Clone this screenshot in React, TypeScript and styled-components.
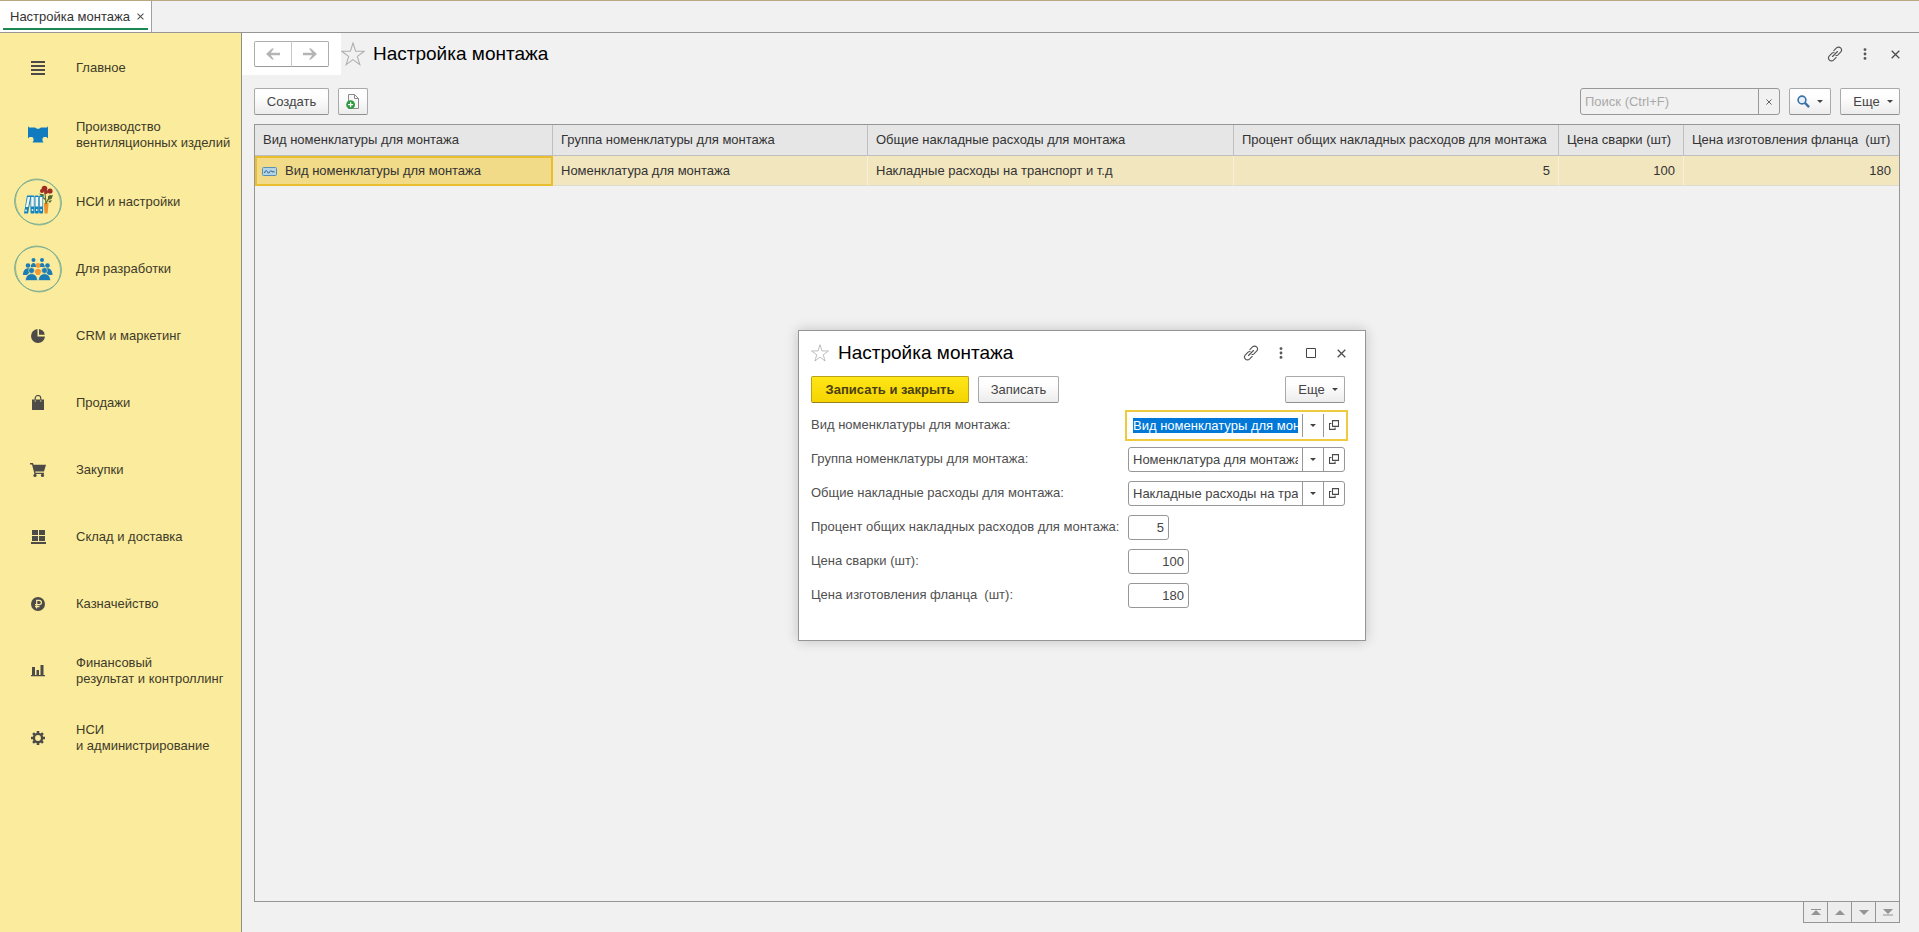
import React, { useEffect, useRef } from "react";
import styled, { createGlobalStyle, css } from "styled-components";

const GlobalStyle = createGlobalStyle`
  *, *::before, *::after { box-sizing: border-box; }
  body {
    margin: 0;
    background: #f1f1f1;
    color: #3f3f3f;
    font: 13px/16px "Liberation Sans", Arial, sans-serif;
  }
  button, input { font: inherit; color: inherit; }
  button { cursor: pointer; }
  svg { flex: none; }
`;

const Page = styled.div`
  display: flex;
  flex-direction: column;
  min-height: 100vh;
`;

const TabBar = styled.div`
  display: flex;
  height: 33px;
  border-top: 1px solid #b9a781;
  border-bottom: 1px solid #969696;
`;

const Tab = styled.div`
  display: flex;
  align-items: center;
  gap: 3px;
  padding: 0 3px 0 10px;
  background: #fff;
  border-right: 1px solid #a0a0a0;
  color: #333;
  position: relative;

  &::after {
    content: "";
    position: absolute;
    left: 3px;
    right: 3px;
    bottom: 2px;
    height: 2px;
    background: #1c8a50;
  }
`;

const IconButton = styled.button<{ $size?: number }>`
  display: inline-flex;
  align-items: center;
  justify-content: center;
  width: ${(p) => p.$size ?? 30}px;
  height: ${(p) => p.$size ?? 30}px;
  padding: 0;
  border: 0;
  background: none;
  color: #4d4d4d;
`;

const Body = styled.div`
  display: flex;
  flex: 1;
`;

const Sidebar = styled.nav`
  flex: none;
  width: 242px;
  padding-top: 1px;
  background: #faec9c;
  border-right: 1px solid #8e8e86;
`;

const MenuLink = styled.a`
  display: grid;
  grid-template-columns: 76px 1fr;
  align-items: center;
  height: 67px;
  color: #3f3a2a;
  text-decoration: none;
  white-space: pre-line;
`;

const MenuIcon = styled.span`
  display: flex;
  justify-content: center;
  color: #4c4b47;
  svg { display: block; }
`;

const Main = styled.main`
  position: relative;
  display: flex;
  flex: 1;
  flex-direction: column;
  min-width: 0;
  padding-bottom: 9px;
`;

const Header = styled.header`
  display: flex;
  align-items: center;
  height: 42px;
  padding-right: 9px;
`;

const HistoryBox = styled.div`
  display: flex;
  align-self: stretch;
  align-items: center;
  padding: 0 12px;
  background: #fff;
`;

const HistoryButton = styled.button`
  display: flex;
  align-items: center;
  justify-content: center;
  width: 38px;
  height: 26px;
  padding: 0;
  background: #fff;
  border: 1px solid #adadad;
  border-bottom-color: #999;
  border-radius: 2px 0 0 2px;
  color: #b4b4b4;

  & + & {
    margin-left: -1px;
    border-left-color: #c8c8c8;
    border-radius: 0 2px 2px 0;
  }
`;

const Title = styled.h1`
  flex: 1;
  margin: 0 0 0 8px;
  color: #000;
  font-size: 19px;
  font-weight: 400;
  line-height: 24px;
`;

const Toolbar = styled.div`
  display: flex;
  align-items: center;
  gap: 9px;
  margin: 13px 19px 9px 12px;
`;

const Spacer = styled.div`
  flex: 1;
`;

const Button = styled.button<{ $primary?: boolean; $width?: number }>`
  display: inline-flex;
  align-items: center;
  justify-content: center;
  gap: 7px;
  width: ${(p) => (p.$width ? `${p.$width}px` : "auto")};
  height: 27px;
  padding: 0;
  background: linear-gradient(#fefefe 30%, #ececec);
  border: 1px solid #a9a9a9;
  border-bottom-color: #8f8f8f;
  border-radius: 2px;
  color: #444;
  white-space: nowrap;

  ${(p) =>
    p.$primary &&
    css`
      background: linear-gradient(#ffe617, #f5d400);
      border-color: #b8a11c;
      border-bottom-color: #94811b;
      color: #4a3f10;
      font-weight: 700;
    `}
`;

const MoreButton = styled(Button)`
  width: 60px;
  padding-left: 6px;
`;

const SearchBox = styled.div`
  display: flex;
  width: 200px;
  height: 27px;
  border: 1px solid #999;
  border-radius: 3px;

  input {
    flex: 1;
    min-width: 0;
    padding: 0 4px;
    border: 0;
    background: none;
    outline: 0;
  }
  input::placeholder { color: #a9a9a9; opacity: 1; }
  button { width: 21px; height: 25px; border-left: 1px solid #999; }
`;

const GridFrame = styled.div`
  flex: 1;
  margin: 0 19px 0 12px;
  border: 1px solid #969696;
`;

const Table = styled.table`
  width: 100%;
  table-layout: fixed;
  border-collapse: separate;
  border-spacing: 0;
  color: #333;

  th, td {
    padding: 0 8px;
    text-align: left;
    font-weight: 400;
    white-space: pre;
    overflow: hidden;
  }
  th {
    height: 31px;
    background: #e6e6e6;
    border-right: 1px solid #bfbfbf;
    border-bottom: 1px solid #bfbfbf;
  }
  td {
    height: 30px;
    background: #f2e6bf;
    border: solid #f7f1dc;
    border-width: 0 1px 1px 0;
    border-bottom-color: #dedccf;
  }
  th:last-child, td:last-child { border-right: 0; }
`;

const NumberCell = styled.td`
  && { text-align: right; }
`;

const ActiveCell = styled.td`
  &&& {
    padding: 0 5px;
    background: #f1db88;
    border: 2px solid #e8bd2e;
  }
  svg { margin-right: 8px; vertical-align: middle; }
`;

const Pager = styled.div`
  display: flex;
  align-self: flex-end;
  margin-right: 19px;
`;

const PagerButton = styled.button`
  display: flex;
  align-items: center;
  justify-content: center;
  width: 25px;
  height: 21px;
  padding: 0;
  margin-left: -1px;
  background: #ededed;
  border: 1px solid #969696;
  border-top: 0;
  color: #949494;
`;

const Dialog = styled.section`
  position: absolute;
  top: 297px;
  left: 556px;
  width: 568px;
  padding: 7px 0 28px 12px;
  background: #fff;
  border: 1px solid #959595;
  box-shadow: 0 0 12px rgba(0, 0, 0, 0.2);
`;

const DialogHeader = styled.div`
  display: flex;
  align-items: center;
  height: 30px;
  padding-right: 9px;

  h2 {
    flex: 1;
    margin: 0 0 0 9px;
    color: #000;
    font-size: 19px;
    font-weight: 400;
    line-height: 24px;
  }
`;

const DialogToolbar = styled.div`
  display: flex;
  gap: 9px;
  margin: 8px 20px 5px 0;
`;

const FieldRow = styled.div`
  display: grid;
  grid-template-columns: 317px 217px;
  align-items: center;
  height: 34px;
  color: #505050;

  label { white-space: pre; }
`;

const Field = styled.div<{ $width?: number; $focused?: boolean }>`
  display: flex;
  align-items: center;
  width: ${(p) => p.$width ?? 217}px;
  height: 25px;
  border: 1px solid #979797;
  border-radius: 3px;
  ${(p) =>
    p.$focused &&
    css`
      border-color: transparent;
      outline: 2px solid #efc93e;
      outline-offset: 1px;
      border-radius: 0;
    `}

  input {
    flex: 1;
    min-width: 0;
    height: 23px;
    padding: 0;
    margin: 0 4px;
    border: 0;
    outline: 0;
    background: none;
    color: #444;
    text-align: ${(p) => (p.$width ? "right" : "left")};
  }
  input::selection { background: #0078d7; color: #fff; }
  button {
    width: 21px;
    height: 23px;
    border-left: 1px solid #979797;
  }
`;

const CrossIcon = ({ size = 9 }: { size?: number }) => (
  <svg width={size} height={size} viewBox="0 0 9 9" fill="none" stroke="currentColor" strokeWidth="1.3">
    <path d="M.7.7l7.6 7.6M8.3.7L.7 8.3" />
  </svg>
);

const StarIcon = ({ size }: { size: number }) => (
  <svg width={size} height={size} viewBox="0 0 24 24" fill="none" stroke="#b0b0b0" strokeWidth="1.1">
    <path d="M12 1l2.600 8.200 8.600.1-6.900 5.100 2.500 8.200-6.800-5-6.800 5 2.500-8.200-6.900-5.100 8.600-.1z" />
  </svg>
);

const LinkIcon = () => (
  <svg width="16" height="16" viewBox="0 0 18 18" fill="none" stroke="#555" strokeWidth="1.300" strokeLinecap="round">
    <path d="M6.2 11.8l5.6-5.6M7.7 5.2l3-3a3.2 3.2 0 0 1 4.6 0 3.4 3.4 0 0 1 0 4.7l-3 3a3 3 0 0 1-2.2.8M10.3 12.8l-3 3a3.2 3.2 0 0 1-4.6 0 3.4 3.4 0 0 1 0-4.7l3-3a3 3 0 0 1 2.2-.8" />
  </svg>
);

const DotsIcon = () => (
  <svg width="4" height="12" viewBox="0 0 4 12" fill="#555">
    <circle cx="2" cy="1.6" r="1.400" />
    <circle cx="2" cy="6" r="1.400" />
    <circle cx="2" cy="10.4" r="1.400" />
  </svg>
);

const SquareIcon = () => (
  <svg width="10" height="10" viewBox="0 0 10 10" fill="none" stroke="#444">
    <path d="M.5.5h9v9h-9z" />
  </svg>
);

const CaretIcon = () => (
  <svg width="6" height="3" viewBox="0 0 6 3" fill="#444">
    <path d="M0 0h6L3 3z" />
  </svg>
);

const OpenIcon = () => (
  <svg width="10" height="10" viewBox="0 0 10 10" fill="none" stroke="#4a4a4a" strokeWidth="1.1">
    <path d="M3.5.6h6v5.8h-6zM2.4 3.5H.5v5.9h5.6V7.6" />
  </svg>
);

const ArrowIcon = ({ right }: { right?: boolean }) => (
  <svg width="14" height="12" viewBox="0 0 14 12" fill="currentColor">
    <path
      d="M0 6l6-5.500h2L4.800 4.800H14v2.400H4.800L8 11.500H6z"
      transform={right ? "matrix(-1 0 0 1 14 0)" : undefined}
    />
  </svg>
);

const CopyIcon = () => (
  <svg width="14" height="16" viewBox="0 0 14 16" fill="none">
    <path d="M2.500.5h6l4 4v10h-10z" fill="#f8f8f8" stroke="#8b8b8b" />
    <path d="M8.500.5v4h4" stroke="#8b8b8b" />
    <circle cx="4.600" cy="10.700" r="4.400" fill="#2c9a3f" />
    <path d="M4.600 8.200v5M2.100 10.700h5" stroke="#fff" strokeWidth="1.300" />
  </svg>
);

const SearchIcon = () => (
  <svg width="13" height="13" viewBox="0 0 13 13" fill="none" stroke="#3c72a4">
    <circle cx="5" cy="5" r="3.900" strokeWidth="1.600" fill="#e4f0fa" />
    <path d="M7.900 7.900l4.200 4.200" strokeWidth="2.400" />
  </svg>
);

const RecordIcon = () => (
  <svg width="15" height="9" viewBox="0 0 15 9" fill="none">
    <rect x=".5" y=".5" width="14" height="8" rx="1" fill="#b4d3e4" stroke="#5790b4" />
    <path d="M2.500 6c1-3 2-3 3-1s1.800 1 2.500-.5 1.500-.6 2 .3h2.500" stroke="#235f8c" />
  </svg>
);

const pagerShapes = [
  "M0 0h10v1H0zM5 1l5 5H0z",
  "M5 1l5 5H0z",
  "M0 1h10L5 6z",
  "M0 0h10L5 5zM0 5.500h10v1H0z",
];

const MenuListIcon = () => (
  <svg width="14" height="14" viewBox="0 0 14 14" fill="currentColor">
    <path d="M0 0h14v2H0zM0 4h14v2H0zM0 8h14v2H0zM0 12h14v2H0z" />
  </svg>
);

const DuctIcon = () => (
  <svg width="20" height="17" viewBox="0 0 20 17" fill="#117bbf">
    <path d="M0 0l1 1.500h6l2 1.300h2l2-1.300h6L20 0v12.500L18.500 11h-2.800L14.500 12.500v2.300l1 1.700h-11l1-1.700v-2.300L4.300 11H1.500L0 12.500z" />
  </svg>
);

const Ring = () => (
  <g fill="none" strokeWidth=".8">
    <ellipse cx="24" cy="24" rx="23.500" ry="22.200" stroke="#5f9c92" transform="rotate(20 24 24)" />
    <ellipse cx="24" cy="24" rx="22" ry="23.500" stroke="#86b391" transform="rotate(-35 24 24)" />
  </g>
);

const BindersIcon = () => (
  <svg width="48" height="48" viewBox="0 0 48 48">
    <Ring />
    <path d="M29.800 25h4.800l-1 10.500h-3z" fill="#ee922c" />
    <path d="M32 26l-1-11M32.300 25l4-8M32 22l-5-4" stroke="#5d6b2c" strokeWidth="1.200" fill="none" />
    <path d="M34 18l5-1-1.500 4-3.500 1zM25 15.500l5 1-1 3.500zM34 23l4-1-2 3z" fill="#57662b" />
    <g fill="#9e2c22">
      <circle cx="30.500" cy="10.500" r="2.800" />
      <circle cx="36" cy="13" r="2.600" />
      <circle cx="28" cy="13" r="2" />
      <circle cx="32" cy="14" r="2" />
    </g>
    <g fill="#1384c0">
      <path d="M13 17.500h4.500l-3.500 18h-4z" />
      <rect x="16.500" y="17.500" width="4" height="18" rx="1" />
      <rect x="20.800" y="17.500" width="4" height="18" rx="1" />
      <rect x="25.100" y="17.500" width="4" height="18" rx="1" />
    </g>
    <g fill="#f0f7f2">
      <path d="M13.700 19h2.500l-2 10h-2.500z" />
      <path d="M17.200 19h2.600v9.500h-2.600zM21.500 19h2.600v9.500h-2.600zM25.800 19h2.600v9.500h-2.600z" />
      <circle cx="12" cy="32.500" r=".9" />
      <circle cx="18.500" cy="32" r=".9" />
      <circle cx="22.800" cy="32" r=".9" />
      <circle cx="27.100" cy="32" r=".9" />
    </g>
  </svg>
);

const PeopleIcon = () => (
  <svg width="48" height="48" viewBox="0 0 48 48">
    <Ring />
    <g fill="#1c7db5">
      <circle cx="19.500" cy="15" r="2" />
      <circle cx="28" cy="15" r="2" />
      <path d="M16.800 22c0-5.500 5.400-5.500 5.400 0zM25.300 22c0-5.500 5.400-5.500 5.400 0z" />
      <circle cx="14" cy="20.500" r="2.300" />
      <circle cx="33.500" cy="20.500" r="2.300" />
      <path d="M9 30c0-8 8-8 8-4l-4 4zM38.500 30c0-8-8-8-8-4l4 4z" />
    </g>
    <circle cx="24" cy="20.500" r="2.400" fill="#f39a36" />
    <path d="M20.800 27c0-4.500 6.400-4.500 6.400 0l-1.700 3h-3z" fill="#f39a36" />
    <g fill="#1c7db5" stroke="#faec9c" strokeWidth=".6">
      <circle cx="17.500" cy="25.500" r="2.900" />
      <circle cx="30.500" cy="25.500" r="2.900" />
      <path d="M11.500 35.500c0-9 12-9 12 0zM24.500 35.500c0-9 12-9 12 0z" />
    </g>
  </svg>
);

const PieIcon = () => (
  <svg width="14" height="14" viewBox="0 0 14 14" fill="currentColor">
    <path d="M6.500 0v7.500H14A7 7 0 1 1 6.500 0z" />
    <path d="M8 0a7 7 0 0 1 5.800 5.700H8z" />
  </svg>
);

const BagIcon = () => (
  <svg width="12" height="15" viewBox="0 0 12 15">
    <path d="M0 4.500h12V15H0z" fill="currentColor" />
    <path d="M3.200 7V3.300a2.800 2.800 0 0 1 5.600 0V7" fill="none" stroke="currentColor" strokeWidth="1.200" />
    <path d="M3.200 4.800v2.200M8.800 4.800v2.200" stroke="#d8cc8c" strokeWidth=".8" />
  </svg>
);

const CartIcon = () => (
  <svg width="16" height="14" viewBox="0 0 16 14" fill="currentColor">
    <path d="M0 0h3l.6 1.800H16L14 8.500H5.200l.4 1.300H14V11H4.500L2 1.400H0z" />
    <circle cx="5" cy="12.400" r="1.600" />
    <circle cx="12.500" cy="12.400" r="1.600" />
  </svg>
);

const StockIcon = () => (
  <svg width="15" height="14" viewBox="0 0 15 14" fill="currentColor">
    <path d="M1 0h6v5H1zM8 0h6v5H8zM1 6h6v5H1zM8 6h6v5H8zM0 12h15v2H0z" />
  </svg>
);

const RubleIcon = () => (
  <svg width="14" height="14" viewBox="0 0 14 14">
    <circle cx="7" cy="7" r="7" fill="currentColor" />
    <path d="M5.700 11.500V3.300h2.500a2.200 2.200 0 0 1 0 4.400H4M4 9.600h4.500" fill="none" stroke="#faec9c" strokeWidth="1.200" />
  </svg>
);

const ChartIcon = () => (
  <svg width="14" height="12" viewBox="0 0 14 12" fill="currentColor">
    <path d="M1 2h3v8H1zM5.500 5h2.500v5H5.500zM9.500 0h3v10h-3zM0 10h14v1.200H0z" />
  </svg>
);

const GearIcon = () => (
  <svg width="14" height="14" viewBox="0 0 14 14" fill="none" stroke="currentColor">
    <circle cx="7" cy="7" r="4.100" strokeWidth="2.400" />
    <path d="M7 0v2.500M7 11.500V14M0 7h2.500M11.500 7H14M2.050 2.050l1.800 1.800M10.150 10.150l1.800 1.800M2.050 11.950l1.800-1.800M10.150 3.850l1.800-1.800" strokeWidth="2.600" />
  </svg>
);

const sections = [
  { label: "Главное", Icon: MenuListIcon },
  { label: "Производство\nвентиляционных изделий", Icon: DuctIcon },
  { label: "НСИ и настройки", Icon: BindersIcon },
  { label: "Для разработки", Icon: PeopleIcon },
  { label: "CRM и маркетинг", Icon: PieIcon },
  { label: "Продажи", Icon: BagIcon },
  { label: "Закупки", Icon: CartIcon },
  { label: "Склад и доставка", Icon: StockIcon },
  { label: "Казначейство", Icon: RubleIcon },
  { label: "Финансовый\nрезультат и контроллинг", Icon: ChartIcon },
  { label: "НСИ\nи администрирование", Icon: GearIcon },
];

const columns = [
  { title: "Вид номенклатуры для монтажа", width: 298 },
  { title: "Группа номенклатуры для монтажа", width: 315 },
  { title: "Общие накладные расходы для монтажа", width: 366 },
  { title: "Процент общих накладных расходов для монтажа", width: 325 },
  { title: "Цена сварки (шт)", width: 125 },
  { title: "Цена изготовления фланца  (шт)" },
];

const fields = [
  { id: "kind", label: "Вид номенклатуры для монтажа:", value: "Вид номенклатуры для монтажа" },
  { id: "group", label: "Группа номенклатуры для монтажа:", value: "Номенклатура для монтажа" },
  { id: "overhead", label: "Общие накладные расходы для монтажа:", value: "Накладные расходы на транспорт и т.д" },
  { id: "percent", label: "Процент общих накладных расходов для монтажа:", value: "5", width: 41 },
  { id: "welding", label: "Цена сварки (шт):", value: "100", width: 61 },
  { id: "flange", label: "Цена изготовления фланца  (шт):", value: "180", width: 61 },
];

export default function App() {
  const firstField = useRef<HTMLInputElement>(null);

  // The whole value is selected, with the text kept scrolled to its start.
  useEffect(() => {
    const input = firstField.current;
    if (!input) return;
    input.focus();
    input.setSelectionRange(0, input.value.length, "backward");
    input.scrollLeft = 0;
  }, []);

  return (
    <Page>
      <GlobalStyle />
      <TabBar>
        <Tab>
          Настройка монтажа
          <IconButton $size={15} aria-label="Закрыть вкладку">
            <CrossIcon size={7} />
          </IconButton>
        </Tab>
      </TabBar>
      <Body>
        <Sidebar>
          {sections.map(({ label, Icon }) => (
            <MenuLink href="#" key={label}>
              <MenuIcon><Icon /></MenuIcon>
              <span>{label}</span>
            </MenuLink>
          ))}
        </Sidebar>
        <Main>
          <Header>
            <HistoryBox>
              <HistoryButton aria-label="Назад"><ArrowIcon /></HistoryButton>
              <HistoryButton aria-label="Вперед"><ArrowIcon right /></HistoryButton>
            </HistoryBox>
            <IconButton $size={24} aria-label="В избранное"><StarIcon size={24} /></IconButton>
            <Title>Настройка монтажа</Title>
            <IconButton aria-label="Ссылка"><LinkIcon /></IconButton>
            <IconButton aria-label="Меню"><DotsIcon /></IconButton>
            <IconButton aria-label="Закрыть"><CrossIcon /></IconButton>
          </Header>
          <Toolbar>
            <Button $width={75}>Создать</Button>
            <Button $width={30} aria-label="Скопировать"><CopyIcon /></Button>
            <Spacer />
            <SearchBox>
              <input aria-label="Поиск" placeholder="Поиск (Ctrl+F)" />
              <IconButton aria-label="Очистить"><CrossIcon size={6} /></IconButton>
            </SearchBox>
            <Button $width={42} aria-label="Найти"><SearchIcon /><CaretIcon /></Button>
            <MoreButton>Еще<CaretIcon /></MoreButton>
          </Toolbar>
          <GridFrame>
            <Table>
              <colgroup>
                {columns.map((c) => <col key={c.title} width={c.width} />)}
              </colgroup>
              <thead>
                <tr>{columns.map((c) => <th key={c.title}>{c.title}</th>)}</tr>
              </thead>
              <tbody>
                <tr>
                  <ActiveCell><RecordIcon />Вид номенклатуры для монтажа</ActiveCell>
                  <td>Номенклатура для монтажа</td>
                  <td>Накладные расходы на транспорт и т.д</td>
                  <NumberCell>5</NumberCell>
                  <NumberCell>100</NumberCell>
                  <NumberCell>180</NumberCell>
                </tr>
              </tbody>
            </Table>
          </GridFrame>
          <Pager>
            {pagerShapes.map((d, i) => (
              <PagerButton key={d} aria-label={["В начало", "Вверх", "Вниз", "В конец"][i]}>
                <svg width="10" height="7" viewBox="0 0 10 7" fill="currentColor"><path d={d} /></svg>
              </PagerButton>
            ))}
          </Pager>
          <Dialog role="dialog" aria-label="Настройка монтажа">
            <DialogHeader>
              <IconButton $size={18} aria-label="В избранное"><StarIcon size={18} /></IconButton>
              <h2>Настройка монтажа</h2>
              <IconButton aria-label="Ссылка"><LinkIcon /></IconButton>
              <IconButton aria-label="Меню"><DotsIcon /></IconButton>
              <IconButton aria-label="Развернуть"><SquareIcon /></IconButton>
              <IconButton aria-label="Закрыть"><CrossIcon /></IconButton>
            </DialogHeader>
            <DialogToolbar>
              <Button $primary $width={158}>Записать и закрыть</Button>
              <Button $width={81}>Записать</Button>
              <Spacer />
              <MoreButton>Еще<CaretIcon /></MoreButton>
            </DialogToolbar>
            {fields.map((f, i) => (
              <FieldRow key={f.id}>
                <label htmlFor={f.id}>{f.label}</label>
                <Field $width={f.width} $focused={i === 0}>
                  <input id={f.id} defaultValue={f.value} ref={i === 0 ? firstField : undefined} />
                  {!f.width && (
                    <>
                      <IconButton aria-label="Выбрать из списка"><CaretIcon /></IconButton>
                      <IconButton aria-label="Открыть"><OpenIcon /></IconButton>
                    </>
                  )}
                </Field>
              </FieldRow>
            ))}
          </Dialog>
        </Main>
      </Body>
    </Page>
  );
}
